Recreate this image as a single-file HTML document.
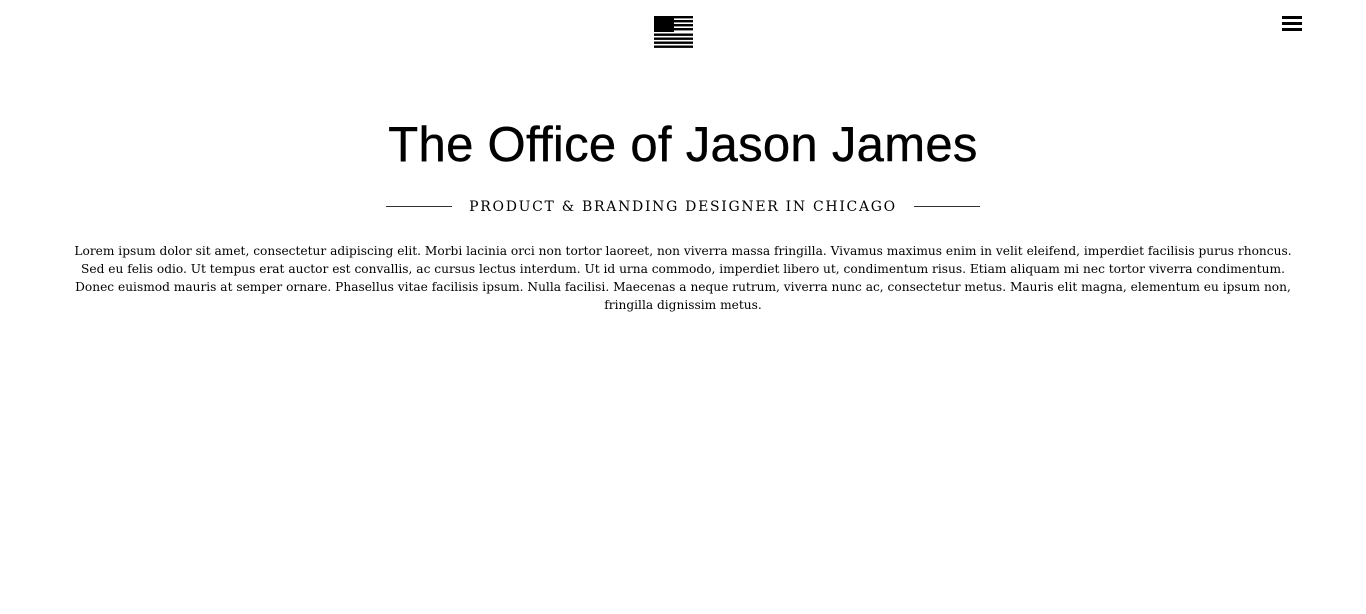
<!DOCTYPE html>
<html><head><meta charset="utf-8"><style>
html,body{margin:0;padding:0;background:#fff;width:1366px;height:614px;overflow:hidden;color:#000}
.flag{position:absolute;left:654px;top:16px;width:39px;height:32px}
.hb{position:absolute;left:1282px;top:16px;width:20px}
.hb i{display:block;height:3px;background:#000;margin-bottom:3px}
h1{position:absolute;top:115px;left:0;width:1366px;text-align:center;margin:0;font:400 49px/60px "Liberation Sans",sans-serif;letter-spacing:0.3px;-webkit-text-stroke:0.4px #000}
.ln{position:absolute;top:206px;height:1px;width:66px;background:#333}
.sub{position:absolute;top:198px;left:0;width:1366px;text-align:center;font:14px/18px "DejaVu Serif",serif;letter-spacing:1.7px}
.p{position:absolute;top:242px;left:0;width:1366px;text-align:center;font:12.2px/18px "DejaVu Serif",serif;white-space:nowrap}
</style></head><body>
<svg class="flag" viewBox="0 0 39 32">
<rect x="0" y="0" width="20" height="16"/>
<rect x="20" y="0" width="19" height="2.4"/>
<rect x="20" y="4" width="19" height="2.4"/>
<rect x="20" y="8" width="19" height="2.4"/>
<rect x="20" y="12" width="19" height="2.4"/>
<rect x="0" y="17.5" width="39" height="2.4"/>
<rect x="0" y="21.5" width="39" height="2.4"/>
<rect x="0" y="25.5" width="39" height="2.4"/>
<rect x="0" y="29.5" width="39" height="2.4"/>
</svg>
<div class="hb"><i></i><i></i><i></i></div>
<h1>The Office of Jason James</h1>
<div class="ln" style="left:386px"></div><div class="ln" style="left:914px"></div>
<div class="sub">PRODUCT &amp; BRANDING DESIGNER IN CHICAGO</div>
<div class="p">Lorem ipsum dolor sit amet, consectetur adipiscing elit. Morbi lacinia orci non tortor laoreet, non viverra massa fringilla. Vivamus maximus enim in velit eleifend, imperdiet facilisis purus rhoncus.<br>Sed eu felis odio. Ut tempus erat auctor est convallis, ac cursus lectus interdum. Ut id urna commodo, imperdiet libero ut, condimentum risus. Etiam aliquam mi nec tortor viverra condimentum.<br>Donec euismod mauris at semper ornare. Phasellus vitae facilisis ipsum. Nulla facilisi. Maecenas a neque rutrum, viverra nunc ac, consectetur metus. Mauris elit magna, elementum eu ipsum non,<br>fringilla dignissim metus.</div>
</body></html>
